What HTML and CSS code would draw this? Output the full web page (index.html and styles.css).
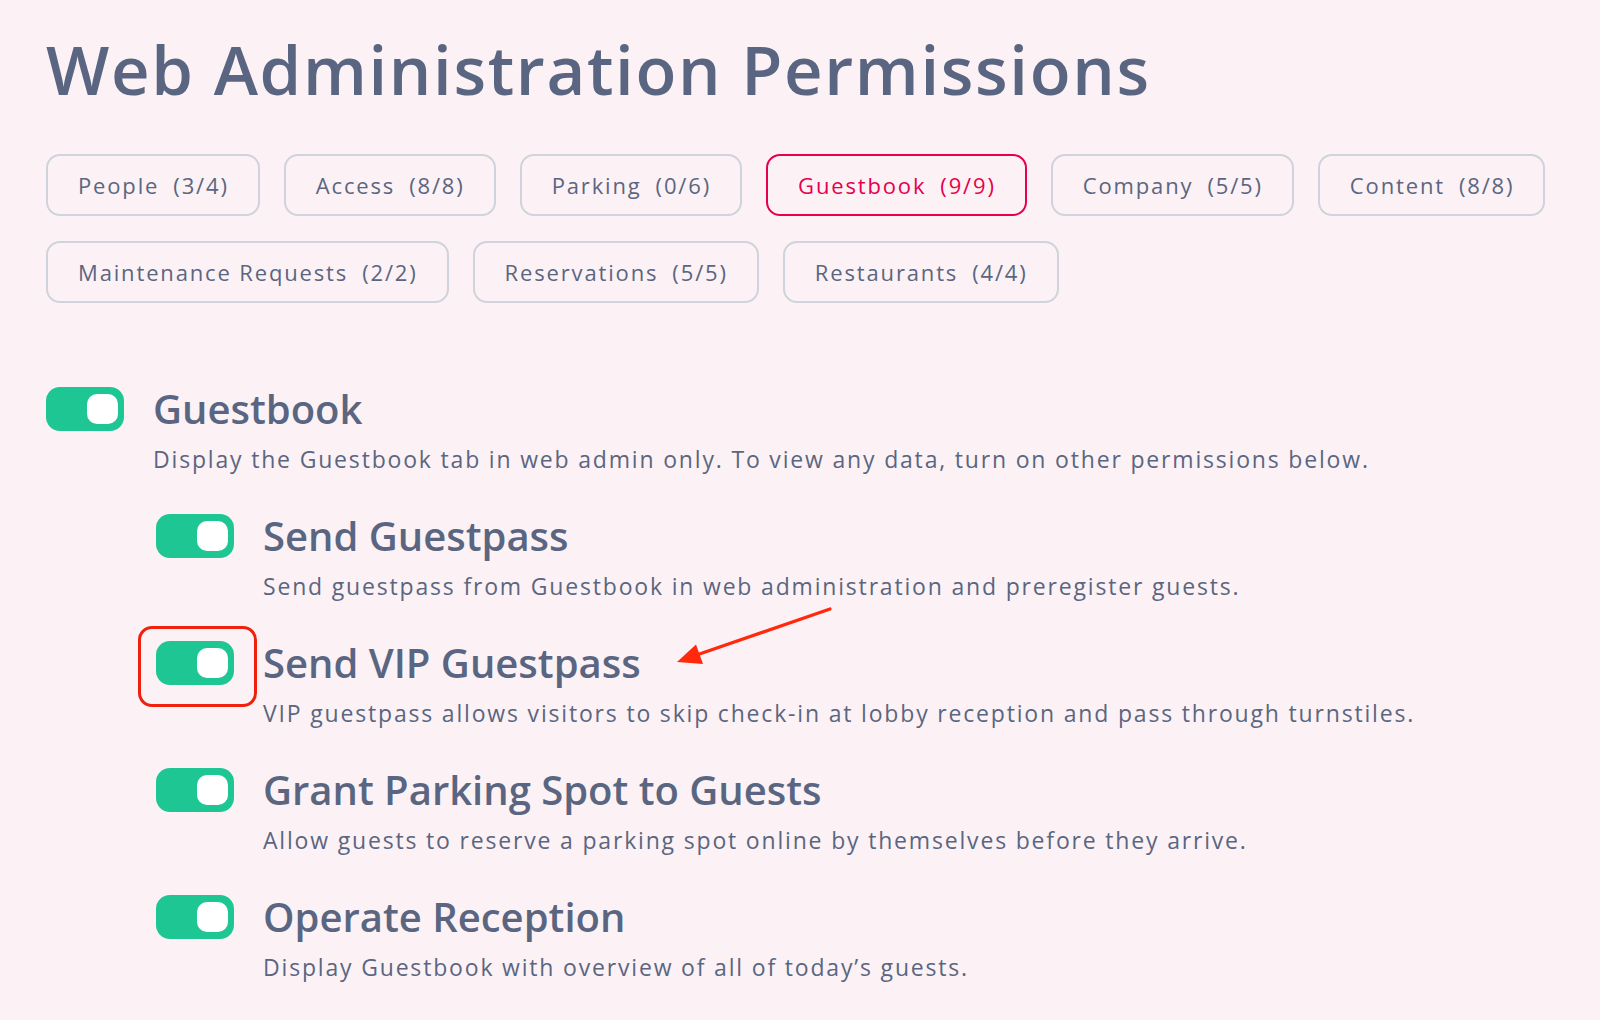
FILE: index.html
```html
<!DOCTYPE html>
<html lang="en">
<head>
<meta charset="utf-8">
<title>Web Administration Permissions</title>
<link rel="stylesheet" href="styles.css">
</head>
<body>
<main class="page">
  <h1 class="title">Web Administration Permissions</h1>

  <nav class="tabs">
    <button class="tab">People<span class="count">(3/4)</span></button>
    <button class="tab">Access<span class="count">(8/8)</span></button>
    <button class="tab">Parking<span class="count">(0/6)</span></button>
    <button class="tab tab-active">Guestbook<span class="count">(9/9)</span></button>
    <button class="tab">Company<span class="count">(5/5)</span></button>
    <button class="tab">Content<span class="count">(8/8)</span></button>
    <button class="tab">Maintenance Requests<span class="count">(2/2)</span></button>
    <button class="tab">Reservations<span class="count">(5/5)</span></button>
    <button class="tab">Restaurants<span class="count">(4/4)</span></button>
  </nav>

  <section class="perms">
    <div class="perm">
      <span class="toggle"><span class="knob"></span></span>
      <h2 class="perm-title">Guestbook</h2>
      <p class="perm-desc">Display the Guestbook tab in web admin only. To view any data, turn on other permissions below.</p>
    </div>

    <div class="sub-perms">
      <div class="perm">
        <span class="toggle"><span class="knob"></span></span>
        <h2 class="perm-title">Send Guestpass</h2>
        <p class="perm-desc">Send guestpass from Guestbook in web administration and preregister guests.</p>
      </div>
      <div class="perm">
        <span class="toggle toggle-highlight"><span class="knob"></span></span>
        <h2 class="perm-title">Send VIP Guestpass</h2>
        <p class="perm-desc">VIP guestpass allows visitors to skip check-in at lobby reception and pass through turnstiles.</p>
      </div>
      <div class="perm">
        <span class="toggle"><span class="knob"></span></span>
        <h2 class="perm-title">Grant Parking Spot to Guests</h2>
        <p class="perm-desc">Allow guests to reserve a parking spot online by themselves before they arrive.</p>
      </div>
      <div class="perm">
        <span class="toggle"><span class="knob"></span></span>
        <h2 class="perm-title">Operate Reception</h2>
        <p class="perm-desc">Display Guestbook with overview of all of today’s guests.</p>
      </div>
    </div>
  </section>

  <svg class="arrow" width="170" height="75" viewBox="0 0 170 75" aria-hidden="true">
    <line x1="160" y1="9" x2="28" y2="54.5" stroke="#ff2a0c" stroke-width="3.2" stroke-linecap="round"/>
    <polygon points="7,62 26,44.5 33,64" fill="#ff2a0c"/>
  </svg>
</main>
</body>
</html>
```

FILE: styles.css
```css
* {
  box-sizing: border-box;
}

html, body {
  margin: 0;
  padding: 0;
  background: #fcf2f5;
}

body {
  font-family: "Open Sans", "Noto Sans", sans-serif;
  color: #5a6681;
}

.page {
  position: relative;
  padding: 29px 0 0 46px;
  min-height: 1020px;
}

.title {
  margin: 0;
  font-size: 67px;
  line-height: 80px;
  font-weight: 600;
  letter-spacing: 1.65px;
  color: #5a6681;
}

.tabs {
  display: flex;
  flex-wrap: wrap;
  column-gap: 24px;
  row-gap: 25px;
  margin-top: 45px;
  max-width: 1520px;
}

.tab {
  height: 62px;
  padding: 0 29px 0 30px;
  border: 2px solid #cfd3da;
  border-radius: 14px;
  background: transparent;
  font-family: inherit;
  font-size: 22px;
  font-weight: 500;
  letter-spacing: 1.85px;
  color: #5a6681;
  display: inline-flex;
  align-items: center;
}

.tab .count {
  margin-left: 14px;
}

.tab-active {
  border-color: #e6004d;
  color: #e6004d;
}

.perms {
  margin-top: 84px;
  display: flex;
  flex-direction: column;
  gap: 40px;
}

.sub-perms {
  margin-left: 110px;
  display: flex;
  flex-direction: column;
  gap: 40px;
}

.perm {
  display: grid;
  grid-template-columns: 78px 1fr;
  column-gap: 29px;
  align-items: center;
}

.toggle {
  position: relative;
  width: 78px;
  height: 44px;
  border-radius: 14px;
  background: #1dc693;
  display: flex;
  justify-content: flex-end;
  align-items: center;
  padding-right: 6px;
}

.knob {
  width: 31px;
  height: 30px;
  border-radius: 10px;
  background: #ffffff;
}

.toggle-highlight::after {
  content: "";
  position: absolute;
  left: -18px;
  top: -15px;
  width: 113px;
  height: 75px;
  border: 3px solid #f0200e;
  border-radius: 14px;
}

.perm-title {
  margin: 0;
  font-size: 40px;
  line-height: 44px;
  font-weight: 600;
  color: #5a6681;
}

.perm-desc {
  grid-column: 2;
  margin: 13px 0 0;
  font-size: 23px;
  line-height: 30px;
  font-weight: 400;
  letter-spacing: 1.82px;
  color: #5a6681;
}

.arrow {
  position: absolute;
  left: 670px;
  top: 600px;
}
```
